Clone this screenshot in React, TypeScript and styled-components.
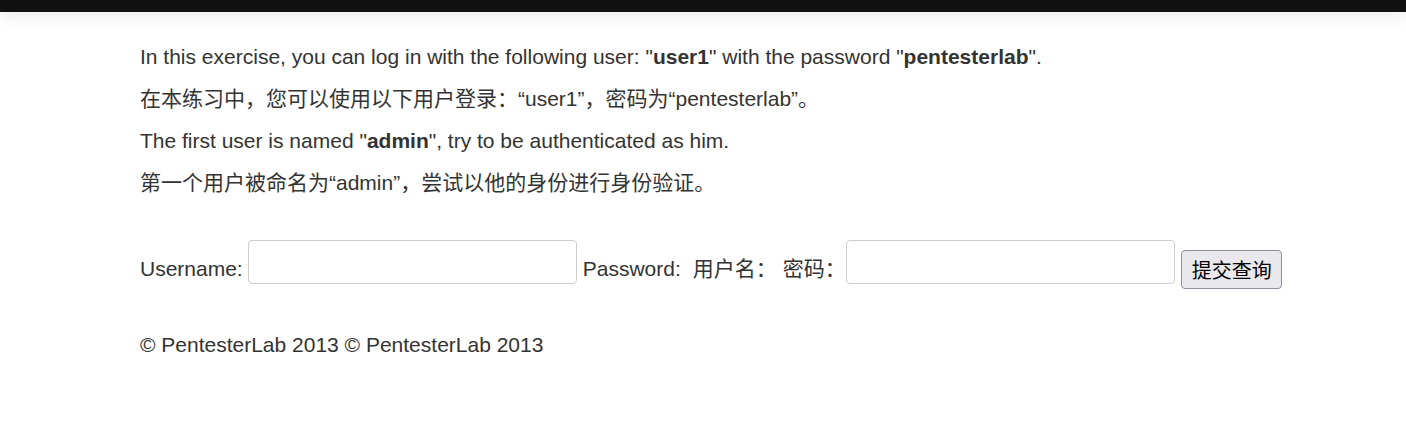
import styled, { createGlobalStyle } from 'styled-components'

const Global = createGlobalStyle`
    html, body {
        margin: 0;
        padding: 0;
        background: #fff;
    }
    body {
        font-family: 'Liberation Sans', Arial, 'Noto Sans CJK SC', sans-serif;
        font-size: 21px;
        color: #333;
    }
`

const NavBar = styled.div`
    height: 12px;
    background-color: #111;
    box-shadow: 0 2px 18px rgba(0, 0, 0, 0.12);
`

const Container = styled.div`
    padding: 29px 0 0 140px;
`

const Para = styled.p`
    margin: 0 0 10px;
    line-height: 32px;
    b {
        font-weight: bold;
    }
`

const Form = styled.form`
    display: flex;
    align-items: center;
    margin-top: 38px;
    height: 54px;
`

const Label = styled.span<{ gap?: number }>`
    margin-right: ${p => p.gap ?? 6}px;
    line-height: 24px;
    padding-top: 10px;
`

const TextInput = styled.input`
    width: 329px;
    height: 44px;
    box-sizing: border-box;
    border: 1px solid #ccc;
    border-radius: 4px;
    margin: 0 6px 4px 0;
    padding: 6px 12px;
    font-size: 18px;
    background: #fff;
`

const Submit = styled.button`
    height: 39px;
    box-sizing: border-box;
    padding: 0 9px 0 10px;
    margin-top: 10px;
    font-family: 'Noto Sans CJK SC', sans-serif;
    font-size: 20px;
    color: #000;
    background: #e9e9ed;
    border: 1px solid #8f8f9d;
    border-radius: 4px;
`

const Footer = styled.footer`
    margin-top: 40px;
    line-height: 28px;
`

export default function App() {
    return (
        <>
            <Global />
            <NavBar />
            <Container>
                <Para>
                    In this exercise, you can log in with the following user: "<b>user1</b>" with the password "<b>pentesterlab</b>".
                </Para>
                <Para>在本练习中，您可以使用以下用户登录：“user1”，密码为“pentesterlab”。</Para>
                <Para>
                    The first user is named "<b>admin</b>", try to be authenticated as him.
                </Para>
                <Para>第一个用户被命名为“admin”，尝试以他的身份进行身份验证。</Para>
                <Form onSubmit={e => e.preventDefault()}>
                    <Label gap={5}>Username:</Label>
                    <TextInput type="text" name="username" />
                    <Label gap={12}>Password:</Label>
                    <Label gap={6}>用户名：</Label>
                    <Label gap={0}>密码：</Label>
                    <TextInput type="password" name="password" />
                    <Submit type="submit">提交查询</Submit>
                </Form>
                <Footer>© PentesterLab 2013 © PentesterLab 2013</Footer>
            </Container>
        </>
    )
}
